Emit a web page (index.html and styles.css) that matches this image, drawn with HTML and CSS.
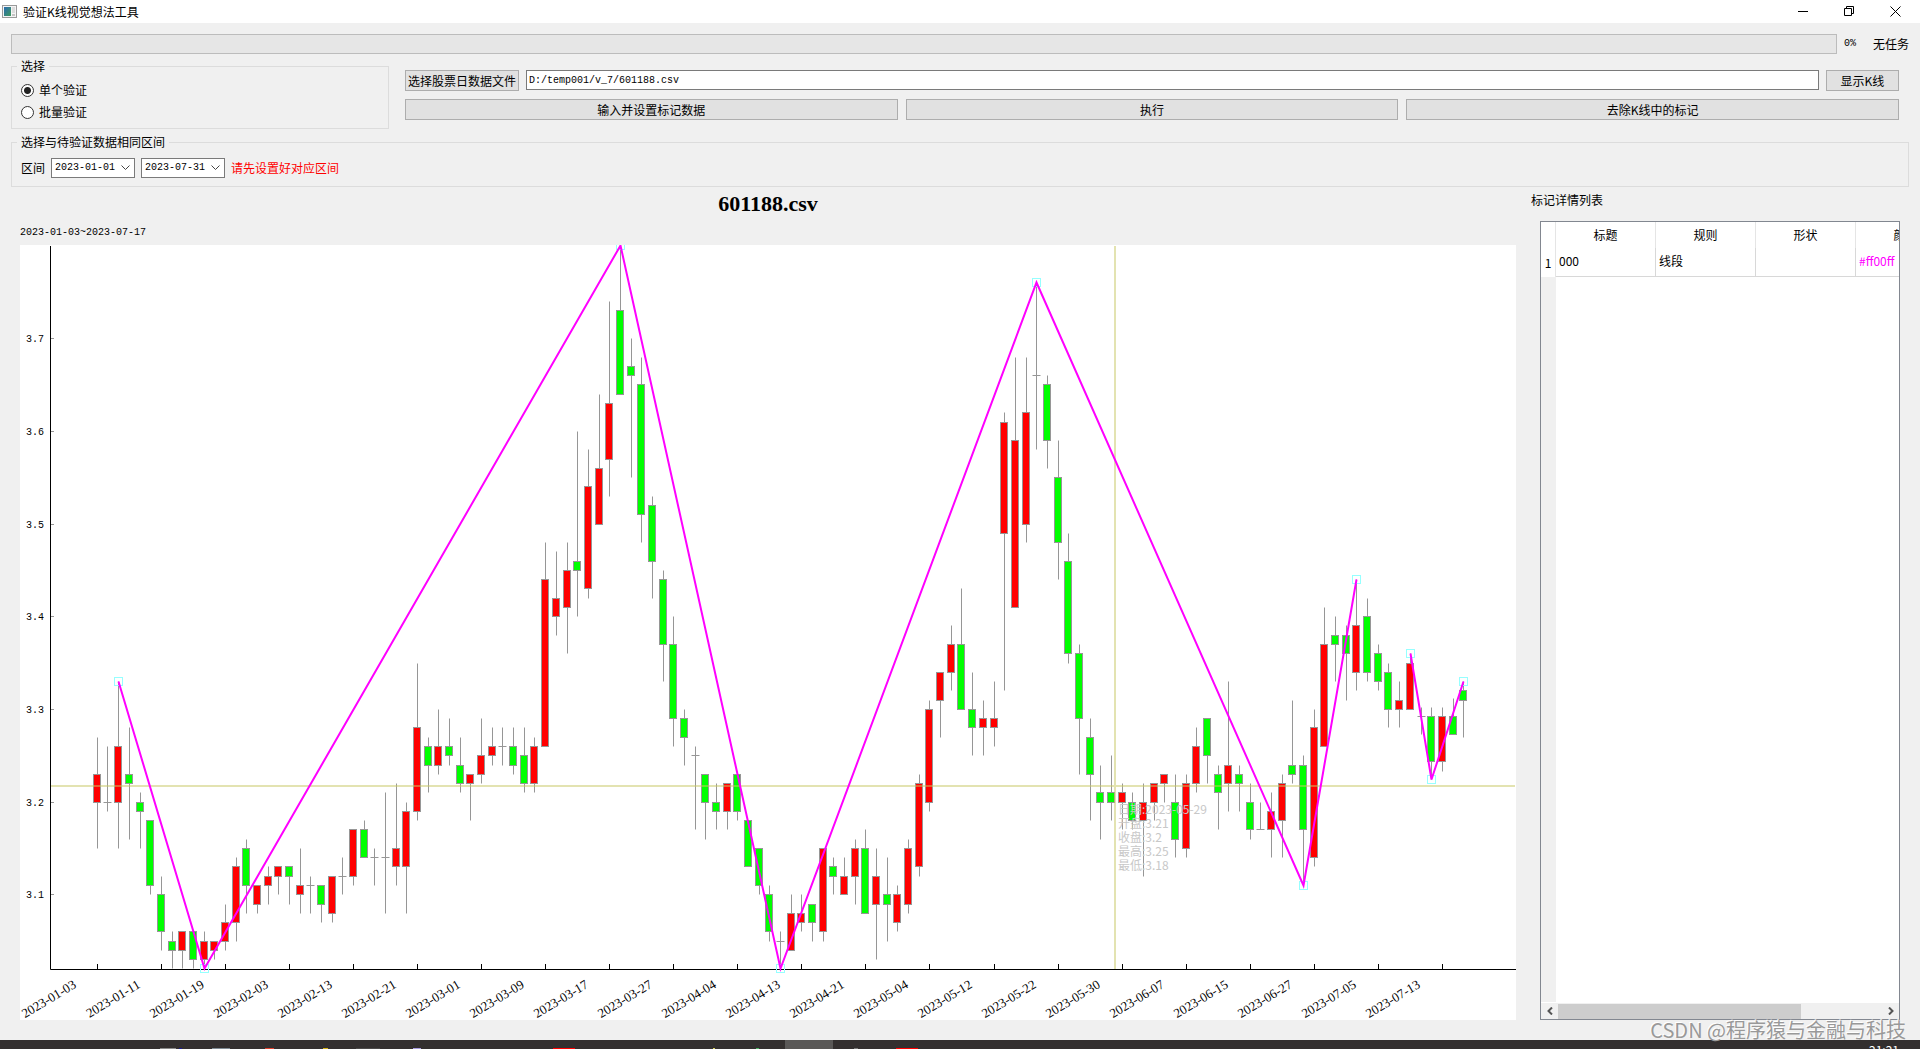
FILE: index.html
```html
<!DOCTYPE html>
<html lang="zh-CN">
<head>
<meta charset="utf-8">
<title>验证K线视觉想法工具</title>
<link rel="stylesheet" href="styles.css">
</head>
<body>
<header class="titlebar">
  <svg class="app-icon" width="15" height="13" viewBox="0 0 15 13" aria-hidden="true">
    <defs><linearGradient id="pane" x1="0" y1="0" x2="1" y2="1"><stop offset="0" stop-color="#2a6bb0"/><stop offset="1" stop-color="#3f9a5c"/></linearGradient></defs>
    <rect x="0.5" y="0.5" width="14" height="12" fill="#f4f4f4" stroke="#9a9a9a"/>
    <rect x="2" y="2" width="7" height="9" fill="url(#pane)"/>
    <rect x="10" y="2" width="3" height="6" fill="#dcdcdc"/>
    <rect x="10" y="9" width="3" height="2" fill="#c4c4c4"/>
  </svg>
  <h1 class="app-title">验证K线视觉想法工具</h1>
  <div class="window-controls">
    <button class="win-btn" aria-label="最小化"><svg width="11" height="11" viewBox="0 0 11 11"><path d="M0 5.5H10"/></svg></button>
    <button class="win-btn" aria-label="还原"><svg width="11" height="11" viewBox="0 0 11 11"><path d="M.5 2.5H7.500V9.500H.5ZM2.500 2.500V.5H9.500V7.500H7.500"/></svg></button>
    <button class="win-btn" aria-label="关闭"><svg width="11" height="11" viewBox="0 0 11 11"><path d="M.5 .5L10.500 10.500M10.500 .5L.5 10.500"/></svg></button>
  </div>
</header>

<main class="window">
  <div class="status">
    <progress class="progress" value="0" max="100" aria-label="进度"></progress>
    <span class="percent">0%</span>
    <span class="task">无任务</span>
  </div>

  <div class="controls">
    <fieldset class="group mode">
      <legend>选择</legend>
      <label class="radio"><input type="radio" name="mode" checked>单个验证</label>
      <label class="radio"><input type="radio" name="mode">批量验证</label>
    </fieldset>
    <div class="actions">
      <div class="file-row">
        <button class="btn file-btn">选择股票日数据文件</button>
        <input class="path" type="text" value="D:/temp001/v_7/601188.csv" aria-label="股票日数据文件">
        <button class="btn show-btn">显示K线</button>
      </div>
      <div class="button-row">
        <button class="btn">输入并设置标记数据</button>
        <button class="btn">执行</button>
        <button class="btn">去除K线中的标记</button>
      </div>
    </div>
  </div>

  <fieldset class="group range">
    <legend>选择与待验证数据相同区间</legend>
    <div class="range-row">
      <label for="from">区间</label>
      <select id="from" class="date"><option>2023-01-01</option></select>
      <select class="date" aria-label="结束日期"><option>2023-07-31</option></select>
      <span class="warning">请先设置好对应区间</span>
    </div>
  </fieldset>

  <div class="content">
    <section class="chart-panel">
      <h2 class="chart-title">601188.csv</h2>
      <p class="chart-range">2023-01-03~2023-07-17</p>
      <svg id="chart" class="chart" viewBox="0 0 1496 775" role="img" aria-label="K线图"></svg>
    </section>
    <section class="marks">
      <h2 class="marks-title">标记详情列表</h2>
      <div class="grid-frame">
        <div class="grid-body">
          <table class="grid">
            <thead><tr><th class="num"></th><th>标题</th><th>规则</th><th>形状</th><th>颜色</th></tr></thead>
            <tbody><tr><th class="num">1</th><td>000</td><td>线段</td><td></td><td class="color">#ff00ff</td></tr></tbody>
          </table>
          <div class="grid-gutter"></div>
        </div>
        <div class="scrollbar">
          <button class="scroll-btn" aria-label="向左"><svg width="6" height="8" viewBox="0 0 6 8"><path d="M5 .5L1.500 4L5 7.500"/></svg></button>
          <div class="track"><div class="thumb"></div></div>
          <button class="scroll-btn" aria-label="向右"><svg width="6" height="8" viewBox="0 0 6 8"><path d="M1 .5L4.500 4L1 7.500"/></svg></button>
        </div>
      </div>
    </section>
  </div>
</main>

<footer class="taskbar">
  <svg class="tasks" width="960" height="9" viewBox="0 0 960 9" aria-hidden="true">
    <rect x="785" width="48" height="9" fill="#5a5857"/>
    <rect x="160" y="8" width="16" height="1" fill="#8a8a8a"/><rect x="179" y="8" width="3" height="1" fill="#1a1a90"/>
    <rect x="212" y="8" width="18" height="1" fill="#7f8a93"/>
    <rect x="265" y="8" width="9" height="1" fill="#e0402c"/>
    <rect x="323" y="8" width="5" height="1" fill="#d8b418"/>
    <rect x="356" y="8" width="24" height="1" fill="#4c4a4a"/>
    <rect x="413" y="8" width="8" height="1" fill="#a79be0"/>
    <rect x="553" y="8" width="22" height="1" fill="#f00"/>
    <rect x="713" y="8" width="2" height="1" fill="#d8d060"/>
    <rect x="756" y="8" width="3" height="1" fill="#48b060"/>
    <rect x="854" y="8" width="4" height="1" fill="#777"/>
    <rect x="896" y="8" width="22" height="1" fill="#f00"/>
  </svg>
  <span class="clock">21:21</span>
</footer>
<div class="watermark">CSDN @程序猿与金融与科技</div>
<script src="chart.js"></script>
</body>
</html>
```
FILE: styles.css
```css
* { box-sizing: border-box; }

body {
  margin: 0;
  min-height: 100vh;
  display: flex;
  flex-direction: column;
  position: relative;
  overflow: hidden;
  background: #f0f0f0;
  color: #000;
  font: 12px/16px "Noto Sans CJK SC", sans-serif;
}

h1, h2, p { margin: 0; font-weight: 400; }
button, input, select { font: inherit; color: inherit; margin: 0; border-radius: 0; }

.titlebar {
  height: 23px;
  padding: 0 2px;
  display: flex;
  align-items: center;
  background: #fff;
}
.app-icon { margin-right: 6px; }
.app-title { flex: 1; font-size: 12px; }
.window-controls { display: flex; }
.win-btn {
  width: 46px;
  height: 21px;
  padding: 0;
  border: 0;
  background: none;
  display: grid;
  place-items: center;
}
.win-btn path { fill: none; stroke: #000; }

.window {
  flex: 1;
  display: flex;
  flex-direction: column;
  padding: 11px 11px 20px;
}

.status { display: flex; align-items: center; padding-bottom: 4px; }
.progress {
  flex: 1;
  height: 20px;
  appearance: none;
  border: 1px solid #bcbcbc;
  background: #e6e6e6;
}
.progress::-webkit-progress-bar { background: #e6e6e6; }
.percent { width: 36px; padding-left: 7px; }
.task { width: 36px; }

.percent, .path, .date, .chart-range {
  font-family: "Liberation Mono", "Noto Sans CJK SC", monospace;
  font-size: 10px;
}

.group {
  margin: 0;
  min-width: 0;
  border: 1px solid #dcdcdc;
}
.group legend { padding: 0 4px; }

.controls { display: flex; gap: 16px; }
.mode { width: 378px; height: 71px; padding: 5px 9px; }
.mode legend, .range legend { margin-left: -4px; }
.radio { display: flex; align-items: center; gap: 5px; height: 22px; }
.radio input {
  appearance: none;
  width: 13px;
  height: 13px;
  border: 1px solid #333;
  border-radius: 50%;
  background: #fff;
}
.radio input:checked { background: radial-gradient(circle, #222 3px, #fff 4px); }

.actions {
  flex: 1;
  display: flex;
  flex-direction: column;
  gap: 8px;
  padding: 12px 10px 0 0;
}
.btn {
  height: 21px;
  padding: 0;
  border: 1px solid #adadad;
  background: #e1e1e1;
  line-height: 16px;
}
.file-row { display: flex; gap: 7px; }
.file-btn { width: 114px; }
.show-btn { width: 73px; }
.path {
  flex: 1;
  height: 20px;
  padding: 0 2px;
  border: 1px solid #7a7a7a;
  background: #fff;
}
.button-row { display: grid; grid-template-columns: repeat(3, 1fr); gap: 8px; }

.range { height: 53px; margin-top: 5px; padding: 8px 9px 0; }
.range-row { display: flex; align-items: center; gap: 6px; }
.date {
  width: 84px;
  height: 20px;
  padding: 0 3px;
  appearance: none;
  border: 1px solid #7a7a7a;
  background: #fff url("data:image/svg+xml,%3Csvg xmlns='http://www.w3.org/2000/svg' width='9' height='6'%3E%3Cpath d='M.5 .5L4.500 4.500L8.500 .5' fill='none' stroke='%23444'/%3E%3C/svg%3E") no-repeat right 4px center;
}
.warning { color: #f00; }

.content { flex: 1; display: flex; gap: 15px; padding: 5px 9px 0; }
.chart-panel { flex: 1; min-width: 0; display: flex; flex-direction: column; }
.chart-title {
  text-align: center;
  font: 700 22px/24px "Liberation Serif", serif;
}
.chart-range { padding: 9px 0 4px; }
.chart { display: block; width: 100%; background: #fff; }

.marks { width: 369px; display: flex; flex-direction: column; }
.marks-title { font-size: 12px; padding-bottom: 13px; }
.grid-frame {
  flex: 1;
  margin-left: 9px;
  border: 1px solid #828790;
  background: #fff;
  display: flex;
  flex-direction: column;
}
.grid-body { flex: 1; overflow: hidden; display: flex; flex-direction: column; }
.grid { width: 415px; table-layout: fixed; border-collapse: separate; border-spacing: 0; }
.grid th { height: 26px; padding: 0; font-weight: 400; border-right: 1px solid #e5e5e5; }
.grid td, .grid tbody th { height: 29px; }
.grid td { padding: 0 3px 2px; border-right: 1px solid #d8d8d8; border-bottom: 1px solid #d8d8d8; }
.grid .num { width: 15px; }
.grid .color { color: #f0f; }
.grid-gutter { flex: 1; width: 15px; background: #f0f0f0; }
.scrollbar { display: flex; height: 17px; padding: 1px 0; background: #f0f0f0; border-top: 1px solid #fff; }
.scroll-btn { width: 17px; padding: 0; border: 0; background: none; display: grid; place-items: center; }
.scroll-btn path { fill: none; stroke: #555; stroke-width: 2; }
.track { flex: 1; }
.thumb { width: 75%; height: 15px; background: #cdcdcd; }

.taskbar {
  height: 9px;
  display: flex;
  justify-content: space-between;
  overflow: hidden;
  padding-right: 21px;
  background: #332f2f;
}
.clock { padding-top: 2px; color: #fff; }

.watermark {
  position: absolute;
  right: 14px;
  bottom: 7px;
  color: #999;
  font-size: 20px;
  line-height: 24px;
  text-shadow: -1px -1px 0 #fff;
}

.candle { stroke: #969696; }
.up { fill: #f00; }
.down { fill: #0f0; }
.axis { fill: none; stroke: #000; }
.tick { stroke: #969696; }
.cursor { stroke: #c8c864; stroke-opacity: 0.5; stroke-width: 2; }
.trend { fill: none; stroke: #f0f; stroke-width: 2; }
.handle { fill: none; stroke: #96ffff; }
.date-label { font: 13px "Liberation Serif", serif; text-anchor: end; }
.price-label { font: 10px "Liberation Mono", monospace; text-anchor: end; }
.tip { fill: #c8c8c8; font: 12px "Noto Sans CJK SC", sans-serif; }
```
FILE: chart.js
```js
// Each row: kind, body low, body high, low, high (cents above 3.00).
const candles = `
R 20 23 15 27|N 20 20 19 26|R 20 26 15 33|G 22 23 16 28|G 19 20 15 21|G 11 18 10 18
G 6 10 4 12|G 4 5 2 6|R 4 6 2 6|G 3 6 2 6|R 3 5 2 6|R 4 5 3 5
R 5 7 4 9|R 7 13 5 14|G 11 15 8 16|R 9 11 8 11|R 11 12 9 13|R 12 13 10 13
G 12 13 9 13|R 10 11 8 15|N 11 11 8 12|G 9 11 7 11|R 8 12 7 12|N 12 12 10 14
R 12 17 11 17|G 14 17 14 18|N 14 14 11 15|N 14 14 8 21|R 13 15 11 22|R 13 19 8 20
R 19 28 18 35|G 24 26 21 27|R 24 26 23 30|G 25 26 24 29|G 22 24 21 27|R 22 23 18 23
R 23 25 22 29|R 25 26 24 28|N 26 26 24 28|G 24 26 23 28|G 22 25 21 28|R 22 26 21 27
R 26 44 26 48|R 40 42 38 47|R 41 45 36 48|G 45 46 40 60|R 43 54 42 58|R 50 56 50 64
R 57 63 53 74|G 64 73 64 80|G 66 67 55 70|G 51 65 48 68|G 46 52 42 53|G 37 44 33 45
G 29 37 26 40|G 27 29 24 30|N 25 25 17 26|G 20 23 16 23|G 19 20 17 22|R 19 22 17 22
G 19 23 18 23|G 13 18 13 18|G 11 15 10 15|G 6 10 5 11|N 5 5 2 6|R 4 8 4 10
R 7 8 6 10|G 7 9 5 9|R 6 15 5 15|G 12 13 10 14|R 10 12 10 14|R 12 15 9 16
G 8 15 8 17|R 9 12 3 15|G 9 10 5 14|R 7 10 6 11|R 9 15 8 16|R 13 22 12 23
R 20 30 19 31|R 31 34 27 34|R 34 37 32 39|G 30 37 30 43|G 28 30 25 34|R 28 29 25 31
R 28 29 26 33|R 49 61 32 62|R 41 59 41 68|R 50 62 48 68|N 66 66 58 76|G 59 65 56 66
G 48 55 44 59|G 36 46 35 49|G 29 36 23 37|G 23 27 18 29|G 20 21 16 24|G 20 21 18 25
R 20 21 17 22|G 18 20 17 21|R 18 20 12 22|R 20 22 18 22|R 22 23 20 23|G 16 20 14 23
R 15 22 14 23|R 22 26 21 28|G 25 29 22 29|G 21 23 17 24|R 22 24 19 33|G 22 23 19 24
G 17 20 16 22|N 17 17 17 20|R 17 19 14 21|R 18 22 14 23|G 23 24 22 31|G 17 24 11 25
R 14 28 13 30|R 26 37 26 41|G 37 38 33 40|G 36 38 31 39|R 34 39 32 44|G 34 40 33 42
G 33 36 32 37|G 30 34 28 35|R 30 31 28 33|R 30 35 30 36|N 29.2 29.2 27.3 30.2|G 24.4 29.2 22.4 30.2
R 24.4 29.2 23.3 30.2|G 27.3 29.2 27.3 31.2|G 31 32 27 33`
  .trim().split(/[|\n]/).map(row => {
    const [kind, ...values] = row.split(' ');
    return [kind, ...values.map(Number)];
  });

const dates = ['01-03', '01-11', '01-19', '02-03', '02-13', '02-21', '03-01', '03-09', '03-17',
  '03-27', '04-04', '04-13', '04-21', '05-04', '05-12', '05-22', '05-30', '06-07', '06-15',
  '06-27', '07-05', '07-13'];

// Marked segments as [candle index, cents above 3.00].
const trends = [
  [[2, 33], [10, 2], [49, 80], [64, 2], [88, 76], [113, 11], [118, 44]],
  [[123, 36], [125, 22.4], [128, 33]]
];

const tip = ['日期:2023-05-29', '开盘:3.21', '收盘:3.2', '最高:3.25', '最低:3.18'];

const chart = document.getElementById('chart');
const x = i => Math.floor(77.3 + 10.675 * i) + 0.5;
const y = v => Math.round(742 - 9.27 * v) + 0.5;

function add(name, attrs, text) {
  const el = document.createElementNS('http://www.w3.org/2000/svg', name);
  for (const key in attrs) el.setAttribute(key, attrs[key]);
  if (text) el.textContent = text;
  chart.appendChild(el);
}

candles.forEach(([kind, bottom, top, low, high], i) => {
  add('path', { class: 'candle', d: `M${x(i)} ${y(high)}V${y(low)}` });
  if (kind === 'N') {
    add('path', { class: 'candle', d: `M${x(i) - 4} ${y(top)}h8` });
  } else {
    add('rect', {
      class: 'candle ' + (kind === 'R' ? 'up' : 'down'),
      x: x(i) - 4, y: y(top), width: 7, height: y(bottom) - y(top)
    });
  }
});

for (let p = 1; p <= 7; p++) {
  add('path', { class: 'tick', d: `M31 ${y(p * 10)}h3` });
  add('text', { class: 'price-label', x: 24, y: y(p * 10) + 3 }, '3.' + p);
}
for (let i = 0; i < 22; i++) {
  add('path', { class: 'axis', d: `M${x(i * 6)} 719v5` });
  add('text', { class: 'date-label', transform: `translate(${57 + i * 64} 742) rotate(-31)` }, '2023-' + dates[i]);
}

add('path', { class: 'axis', d: 'M30.5 1V724.5H1496' });
add('path', { class: 'cursor', d: 'M31 541H1495M1095 1V724' });

trends.forEach(points => {
  points.forEach(([i, v]) => {
    add('rect', { class: 'handle', x: x(i) - 4, y: y(v) - 4, width: 8, height: 8 });
  });
  add('polyline', { class: 'trend', points: points.map(([i, v]) => `${x(i)},${y(v)}`).join(' ') });
});

tip.forEach((line, i) => add('text', { class: 'tip', x: 1098, y: 569 + i * 14 }, line));
```
